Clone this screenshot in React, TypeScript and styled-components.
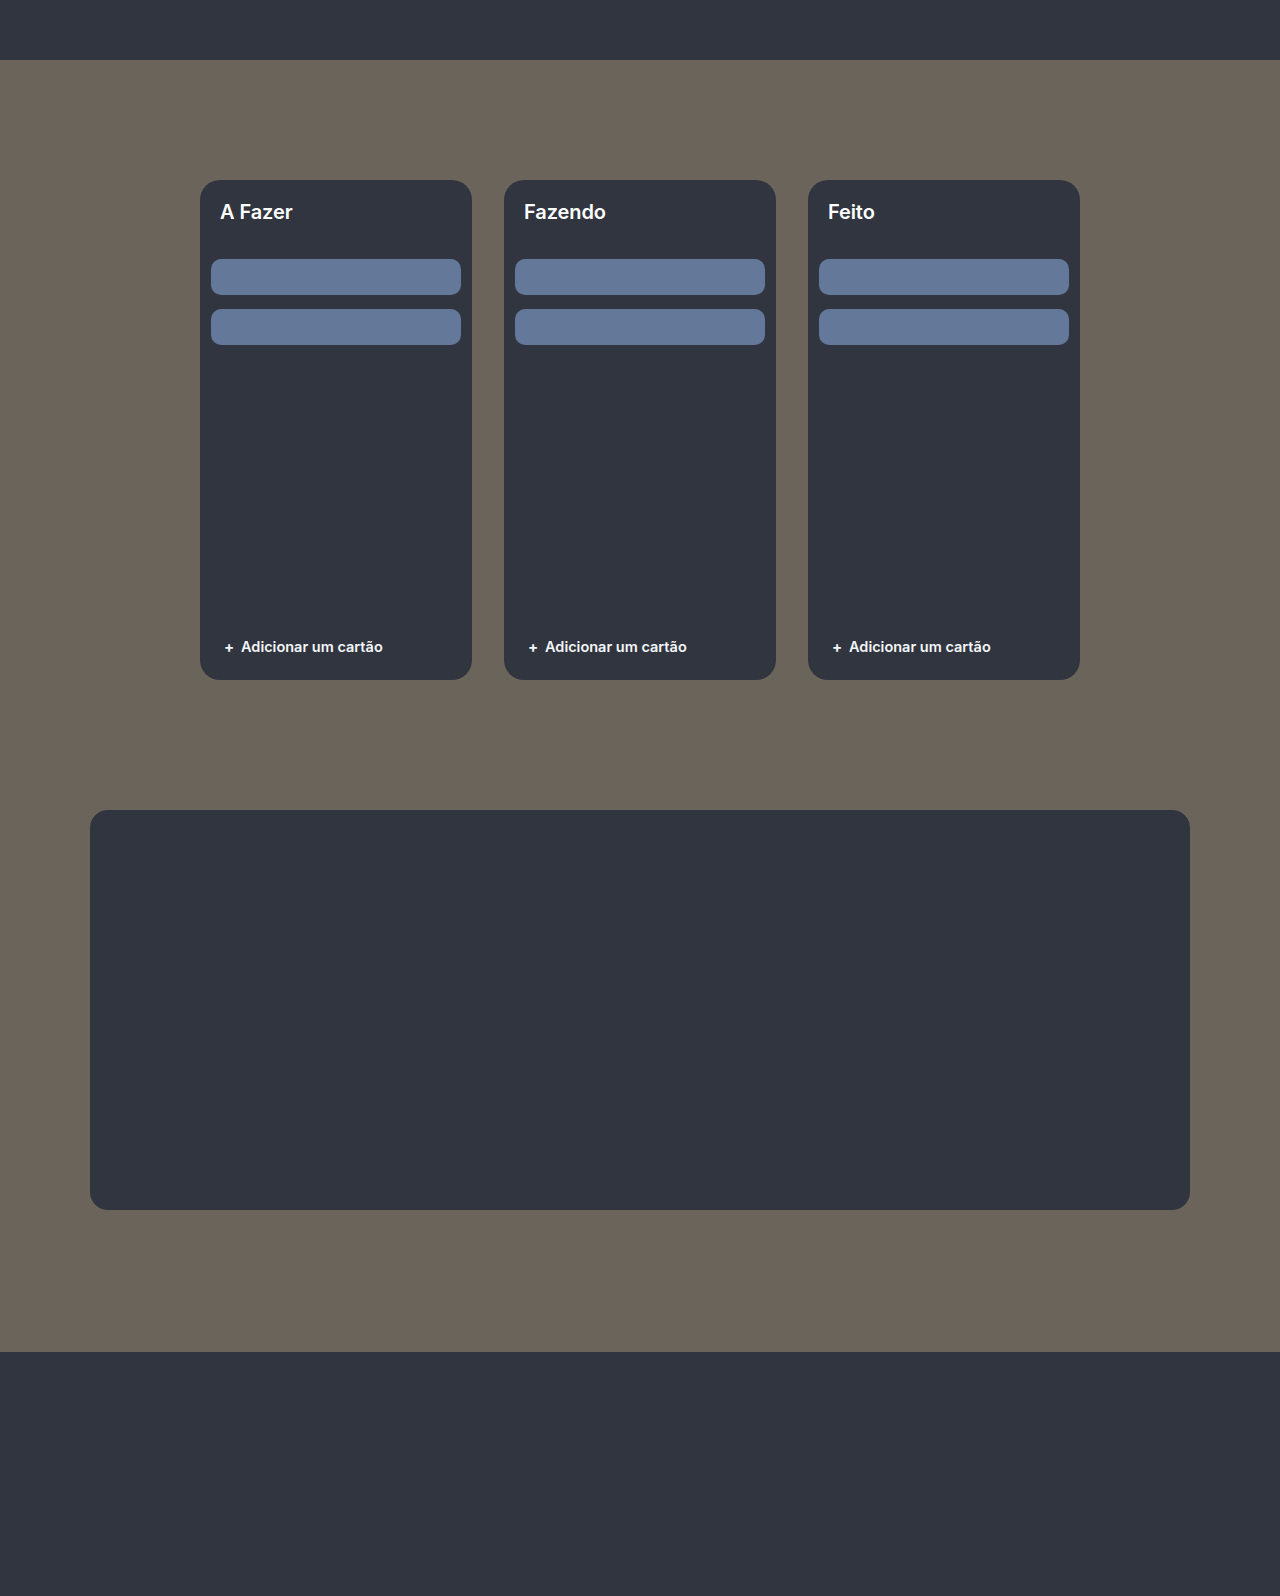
import React from "react";
import styled, { createGlobalStyle } from "styled-components";

const GlobalStyle = createGlobalStyle`
  html, body { margin: 0; padding: 0; }
  body {
    background: #31353f;
    font-family: Inter, "Noto Sans", Arial, sans-serif;
    color: #f4f5f7;
  }
  * { box-sizing: border-box; }
`;

const Header = styled.header`
  height: 60px;
  background: #31353f;
`;

const Main = styled.main`
  background: #6b645a;
  height: 1292px;
  padding-top: 120px;
  display: flex;
  flex-direction: column;
  align-items: center;
`;

const Board = styled.div`
  display: flex;
  gap: 32px;
`;

const Column = styled.section`
  width: 272px;
  height: 500px;
  background: #31353f;
  border-radius: 20px;
  padding: 0 11px;
  display: flex;
  flex-direction: column;
`;

const ColumnTitle = styled.h2`
  margin: 0;
  padding: 20px 9px 0;
  height: 79px;
  font-size: 20px;
  font-weight: 600;
  line-height: 24px;
  color: #ffffff;
  letter-spacing: -0.1px;
`;

const CardList = styled.div`
  display: flex;
  flex-direction: column;
  gap: 14px;
  flex: 1;
`;

const Card = styled.div`
  height: 36px;
  background: #64789a;
  border-radius: 10px;
`;

const AddButton = styled.button`
  all: unset;
  display: flex;
  align-items: center;
  gap: 9px;
  padding: 0 0 23px 13px;
  font-family: Inter, "Noto Sans", Arial, sans-serif;
  font-size: 14.5px;
  font-weight: 600;
  line-height: 20px;
  color: #f4f5f7;
  cursor: pointer;
`;

const Plus = styled.span`
  font-size: 15px;
  font-weight: 700;
  width: 8px;
  text-align: center;
`;

const Panel = styled.div`
  margin-top: 130px;
  width: 1100px;
  height: 400px;
  background: #31353f;
  border-radius: 18px;
`;

const Footer = styled.footer`
  height: 244px;
  background: #31353f;
`;

const columns = ["A Fazer", "Fazendo", "Feito"];

export default function App() {
  return (
    <>
      <GlobalStyle />
      <Header />
      <Main>
        <Board>
          {columns.map((title) => (
            <Column key={title}>
              <ColumnTitle>{title}</ColumnTitle>
              <CardList>
                <Card />
                <Card />
              </CardList>
              <AddButton>
                <Plus>+</Plus>
                Adicionar um cartão
              </AddButton>
            </Column>
          ))}
        </Board>
        <Panel />
      </Main>
      <Footer />
    </>
  );
}
